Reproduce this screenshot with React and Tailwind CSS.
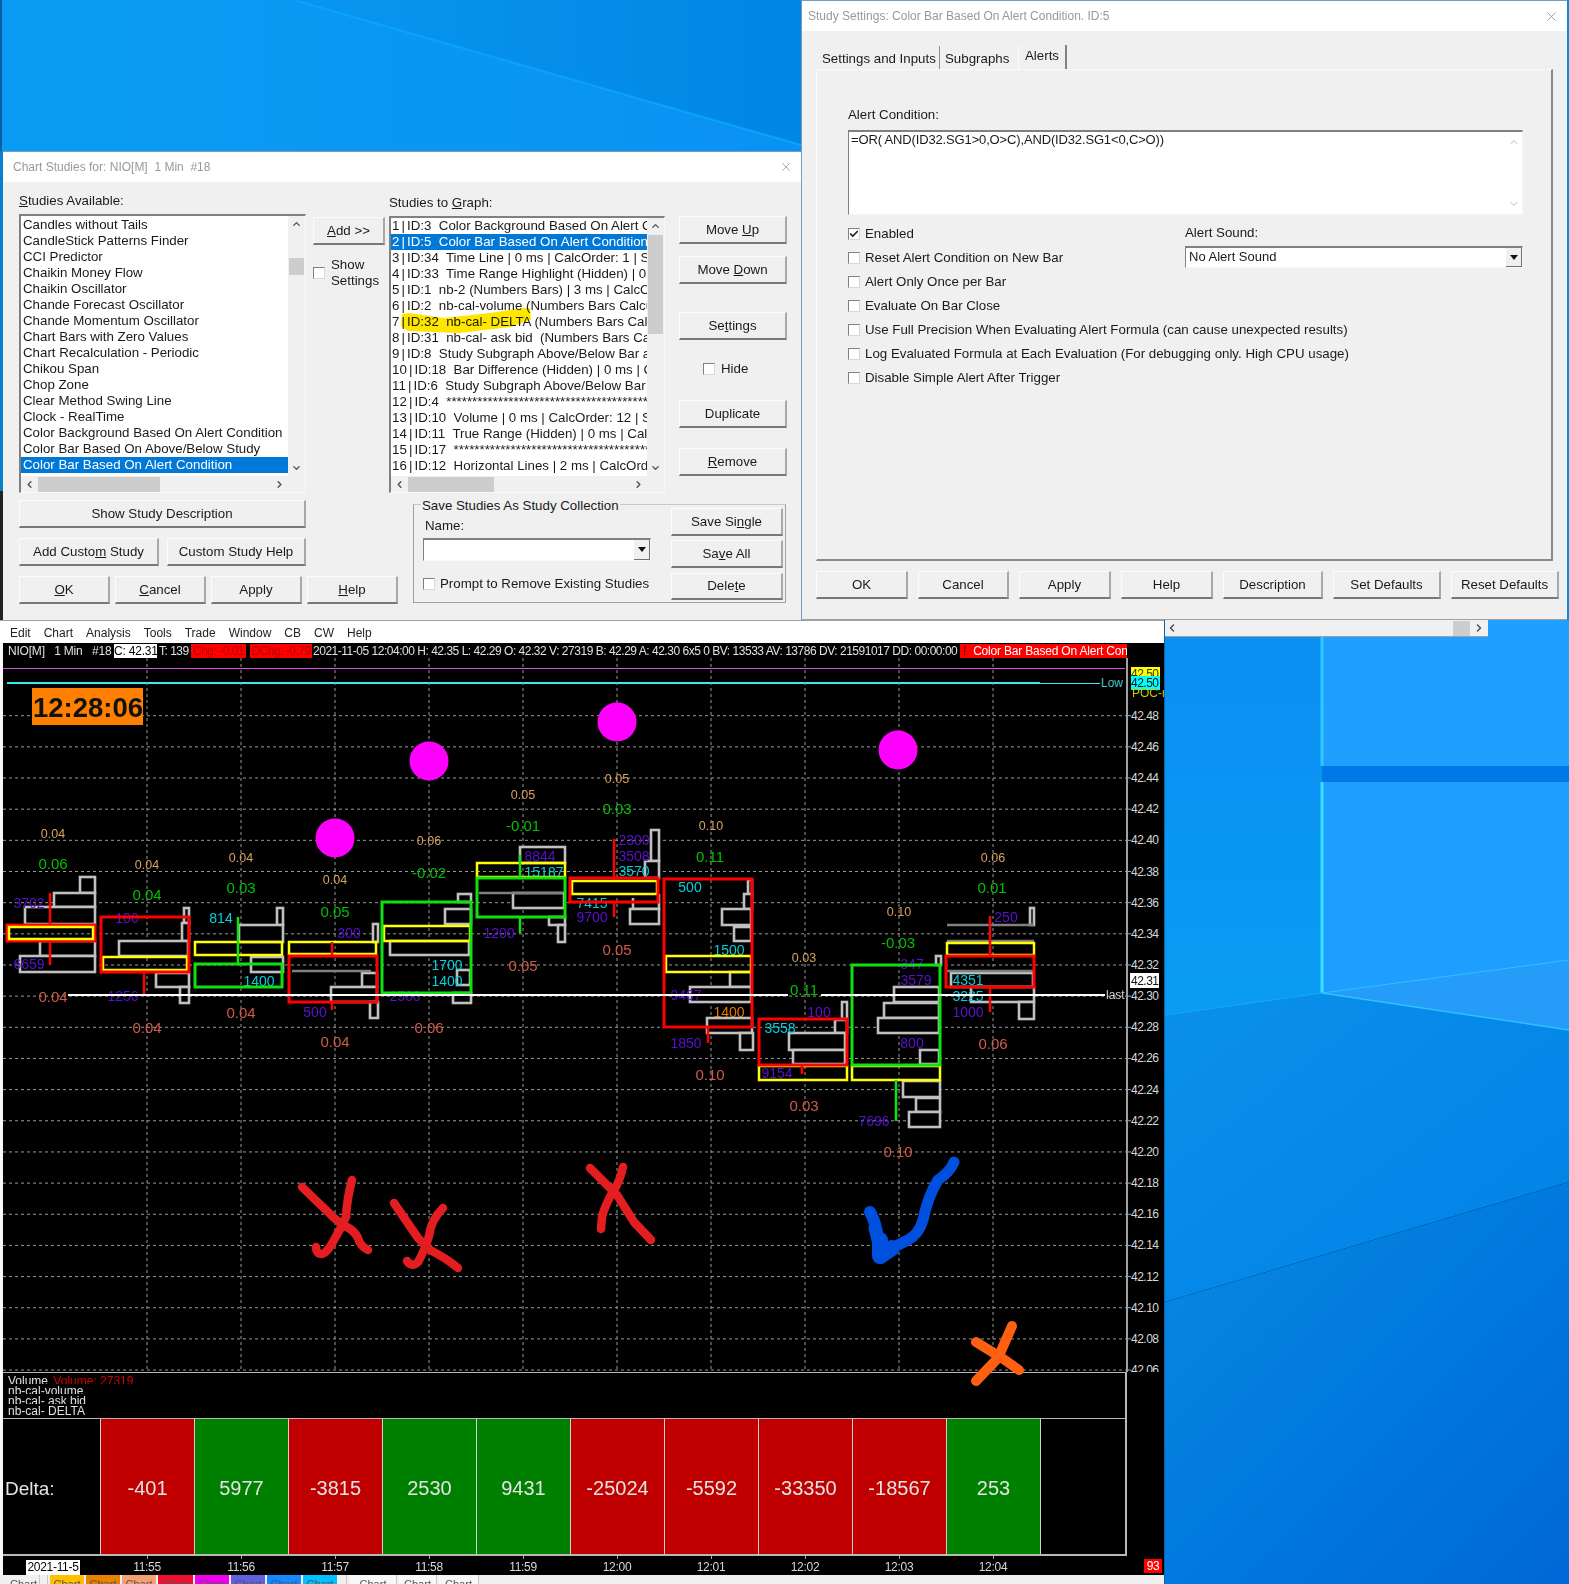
import { Check, ChevronDown, ChevronLeft, ChevronRight, ChevronUp, X } from "lucide-react";

const available = [
  "Candles without Tails", "CandleStick Patterns Finder", "CCI Predictor", "Chaikin Money Flow",
  "Chaikin Oscillator", "Chande Forecast Oscillator", "Chande Momentum Oscillator", "Chart Bars with Zero Values",
  "Chart Recalculation - Periodic", "Chikou Span", "Chop Zone", "Clear Method Swing Line", "Clock - RealTime",
  "Color Background Based On Alert Condition", "Color Bar Based On Above/Below Study", "Color Bar Based On Alert Condition",
];

const stars = "****************************************************************";
const graphed = [
  "1 | ID:3  Color Background Based On Alert Condition", "2 | ID:5  Color Bar Based On Alert Condition",
  "3 | ID:34  Time Line | 0 ms | CalcOrder: 1 | S_", "4 | ID:33  Time Range Highlight (Hidden) | 0 ms",
  "5 | ID:1  nb-2 (Numbers Bars) | 3 ms | CalcOrder", "6 | ID:2  nb-cal-volume (Numbers Bars Calculated)",
  "7 | ID:32  nb-cal- DELTA (Numbers Bars Calculated)", "8 | ID:31  nb-cal- ask bid  (Numbers Bars Calculated)",
  "9 | ID:8  Study Subgraph Above/Below Bar and", "10 | ID:18  Bar Difference (Hidden) | 0 ms | CalcOrder",
  "11 | ID:6  Study Subgraph Above/Below Bar and", "12 | ID:4  " + stars,
  "13 | ID:10  Volume | 0 ms | CalcOrder: 12 | S_", "14 | ID:11  True Range (Hidden) | 0 ms | CalcOrder",
  "15 | ID:17  " + stars, "16 | ID:12  Horizontal Lines | 2 ms | CalcOrder: 16",
];

const alertChecks = [
  "Alert Only Once per Bar", "Evaluate On Bar Close",
  "Use Full Precision When Evaluating Alert Formula (can cause unexpected results)",
  "Log Evaluated Formula at Each Evaluation (For debugging only. High CPU usage)",
  "Disable Simple Alert After Trigger",
];

const times = ["11:55", "11:56", "11:57", "11:58", "11:59", "12:00", "12:01", "12:02", "12:03", "12:04"];
const deltas = ["-401", "5977", "-3815", "2530", "9431", "-25024", "-5592", "-33350", "-18567", "253"];

const tabs = [
  { w: "w-[34px]", c: "bg-[#ffc000]" }, { w: "w-[34px]", c: "bg-[#e88000]" }, { w: "w-[34px]", c: "bg-[#f4a070]" },
  { w: "w-[35px]", c: "bg-[#ee1030]" }, { w: "w-[34px]", c: "bg-[#f000f0]" }, { w: "w-[34px]", c: "bg-[#6060e0]" },
  { w: "w-[34px]", c: "bg-[#1488ff]" }, { w: "w-[34px]", c: "bg-[#00c0ff]" },
];

// chart drawing, coordinates are page pixels
const priceLabels = ["42.48", "42.46", "42.44", "42.42", "42.40", "42.38", "42.36", "42.34", "42.32", "42.30", "42.28", "42.26", "42.24", "42.22", "42.20", "42.18", "42.16", "42.14", "42.12", "42.10", "42.08", "42.06"];
const priceY = (i) => 715.7 + i * 31.16;
const gridX = [147, 241, 335, 429, 523, 617, 711, 805, 899, 993];

// profile steps [x1, y1, x2, y2]
const profile = [
  [80, 877, 95, 893], [54, 893, 95, 907], [25, 907, 95, 924], [40, 941, 95, 956], [20, 956, 95, 972],
  [184, 908, 189, 923], [182, 923, 189, 941], [119, 941, 188, 956], [156, 973, 189, 987], [180, 987, 189, 1003],
  [277, 908, 283, 925], [239, 925, 283, 942], [251, 957, 283, 972],
  [373, 924, 378, 942], [362, 973, 377, 987], [331, 987, 377, 1002], [370, 1002, 378, 1018],
  [458, 894, 471, 902], [445, 909, 471, 924], [390, 941, 469, 955], [457, 970, 470, 985], [453, 993, 471, 1003],
  [520, 847, 565, 863], [513, 893, 564, 908], [549, 917, 565, 925], [558, 925, 565, 942],
  [651, 830, 659, 861], [645, 861, 659, 878], [633, 895, 659, 909], [630, 909, 659, 924],
  [748, 880, 752, 894], [744, 894, 752, 909], [722, 909, 751, 925], [734, 927, 751, 941], [730, 972, 751, 987], [690, 987, 751, 1002], [707, 1018, 752, 1033], [740, 1033, 753, 1050],
  [842, 1002, 847, 1019], [835, 1020, 847, 1033], [789, 1033, 845, 1050], [793, 1050, 845, 1064],
  [936, 956, 941, 965], [894, 987, 939, 1002], [884, 1003, 939, 1018], [878, 1018, 939, 1033], [920, 1050, 939, 1064], [903, 1081, 940, 1097], [916, 1098, 940, 1112], [909, 1112, 940, 1127],
  [1030, 908, 1034, 925], [951, 973, 1033, 987], [971, 987, 1034, 1002], [1019, 1002, 1034, 1019],
];

const darkLines = [[292, 371, 971], [479, 563, 893], [947, 1034, 925], [947, 1034, 941], [947, 1034, 971]];

// boxes [x1, y1, x2, y2, color]
const red = "#ff0000", lime = "#10e010", yel = "#ffff00";
const boxes = [
  [7, 925, 95, 941, red], [9, 927, 93, 939, yel],
  [103, 957, 187, 970, yel], [101, 917, 189, 972, red],
  [195, 942, 282, 955, yel], [195, 964, 282, 987, lime],
  [289, 942, 376, 954, yel], [289, 956, 377, 1002, red],
  [384, 926, 470, 941, yel], [382, 902, 471, 993, lime],
  [477, 863, 565, 877, yel], [477, 878, 565, 917, lime],
  [572, 881, 657, 894, yel], [570, 878, 658, 902, red],
  [666, 956, 751, 972, yel], [664, 879, 752, 1027, red],
  [759, 1066, 847, 1080, yel], [759, 1019, 847, 1065, red],
  [852, 1066, 940, 1080, yel], [852, 965, 940, 1065, lime],
  [947, 943, 1034, 955, yel], [946, 956, 1034, 987, red],
];

// wicks [x, y1, y2, color]
const wicks = [
  [50, 893, 925, red], [50, 941, 965, red], [144, 972, 995, red], [238, 917, 964, lime],
  [332, 942, 956, red], [332, 1002, 1010, red], [520, 855, 878, lime], [520, 917, 933, lime],
  [614, 839, 880, red], [614, 902, 917, red], [708, 1027, 1043, red], [802, 1065, 1074, red],
  [896, 1080, 1121, lime], [990, 916, 956, red], [990, 987, 1012, red],
];

const labelStyle = {
  tan: { fill: "#d8a060", size: 12.5 }, green: { fill: "#00c000", size: 15 }, salmon: { fill: "#d05a4a", size: 15 },
  purple: { fill: "#5a10d0", size: 14 }, cyan: { fill: "#00d0e0", size: 14 }, orange: { fill: "#e87800", size: 14 },
};

const labels = [
  [53, 833, "0.04", "tan"], [53, 864, "0.06", "green"], [53, 997, "0.04", "salmon"], [29, 903, "3702", "purple"], [29, 964, "6659", "purple"],
  [147, 864, "0.04", "tan"], [147, 895, "0.04", "green"], [147, 1028, "0.04", "salmon"], [127, 918, "100", "purple"], [123, 996, "1256", "purple"],
  [241, 857, "0.04", "tan"], [241, 888, "0.03", "green"], [241, 1013, "0.04", "salmon"], [221, 918, "814", "cyan"], [259, 981, "1400", "cyan"],
  [335, 879, "0.04", "tan"], [335, 912, "0.05", "green"], [335, 1042, "0.04", "salmon"], [349, 933, "300", "purple"], [315, 1012, "500", "purple"],
  [429, 840, "0.06", "tan"], [429, 873, "-0.02", "green"], [429, 1028, "0.06", "salmon"], [447, 965, "1700", "cyan"], [447, 981, "1400", "cyan"], [405, 996, "2560", "purple"],
  [523, 794, "0.05", "tan"], [523, 826, "-0.01", "green"], [523, 966, "0.05", "salmon"], [540, 856, "8844", "purple"], [544, 872, "15187", "cyan"], [499, 933, "1200", "purple"],
  [617, 778, "0.05", "tan"], [617, 809, "0.03", "green"], [617, 950, "0.05", "salmon"], [634, 840, "2300", "purple"], [634, 856, "3508", "purple"], [634, 871, "3570", "cyan"], [592, 903, "7415", "cyan"], [592, 917, "9700", "purple"],
  [711, 825, "0.10", "tan"], [710, 857, "0.11", "green"], [710, 1075, "0.10", "salmon"], [690, 887, "500", "cyan"], [729, 950, "1500", "cyan"], [686, 995, "9467", "purple"], [729, 1012, "1400", "orange"], [686, 1043, "1850", "purple"],
  [804, 957, "0.03", "tan"], [804, 1106, "0.03", "salmon"], [819, 1012, "100", "purple"], [780, 1028, "3558", "cyan"], [777, 1073, "9154", "purple"],
  [899, 911, "0.10", "tan"], [898, 943, "-0.03", "green"], [898, 1152, "0.10", "salmon"], [912, 964, "347", "purple"], [916, 980, "3579", "purple"], [912, 1043, "800", "purple"], [874, 1121, "7696", "purple"],
  [993, 857, "0.06", "tan"], [992, 888, "0.01", "green"], [993, 1044, "0.06", "salmon"], [1006, 917, "250", "purple"], [968, 980, "4351", "cyan"], [968, 996, "3225", "cyan"], [968, 1012, "1000", "purple"],
];

const dots = [[335, 838], [429, 761], [617, 722], [898, 750]];

function ScrollV({ thumb }) {
  return (
    <div className="w-[17px] flex flex-col items-center bg-[#f0f0f0] text-[#505050]">
      <ChevronUp size={11} strokeWidth={3} className="h-4" />
      <div className={`w-[15px] bg-[#cdcdcd] ${thumb}`} />
      <div className="flex-1" />
      <ChevronDown size={11} strokeWidth={3} className="h-4" />
    </div>
  );
}

function ScrollH({ thumb }) {
  return (
    <div className="h-4 flex items-center bg-[#f0f0f0] text-[#505050]">
      <ChevronLeft size={11} strokeWidth={3} className="w-[17px]" />
      <div className={`h-[15px] bg-[#cdcdcd] ${thumb}`} />
      <div className="flex-1" />
      <ChevronRight size={11} strokeWidth={3} className="w-[17px]" />
    </div>
  );
}

function Btn({ className = "", children }) {
  return (
    <button className={`h-7 flex items-center justify-center bg-[#f0f0f0] border-t border-l border-[#fcfcfc] border-r-2 border-b-2 border-r-[#a8a8a8] border-b-[#787878] text-[13.3px] ${className}`}>
      <span>{children}</span>
    </button>
  );
}

function Box({ checked, className = "" }) {
  return (
    <span className={`w-3 h-3 flex-none flex items-center justify-center bg-white border-t border-l border-[#808080] border-r border-b border-r-[#d8d8d8] border-b-[#d8d8d8] ${className}`}>
      {checked && <Check size={10} strokeWidth={4} className="text-[#222]" />}
    </span>
  );
}

function Combo({ className = "", text }) {
  return (
    <div className={`flex items-stretch bg-white border-t-2 border-l border-[#808080] border-b border-r border-b-[#f8f8f8] border-r-[#f8f8f8] ${className}`}>
      <span className="flex-1 pl-[3px] leading-[18px] text-[13px]">{text}</span>
      <span className="w-[16px] flex items-center justify-center bg-[#f0f0f0] border-r border-b border-[#707070]">
        <svg width="8" height="5" viewBox="0 0 8 5"><polygon points="0,0 8,0 4,5" fill="#111" /></svg>
      </span>
    </div>
  );
}

function StudiesDialog() {
  return (
    <div className="flex-1 bg-[#f0f0f0] flex flex-col border-t border-[#7a9cbc] text-[13.3px] text-[#1a1a1a]">
      <div className="h-[30px] bg-white flex items-center justify-between pl-[10px] pr-[8px] text-[12px] text-[#999]">
        <span className="whitespace-pre">Chart Studies for: NIO[M]  1 Min  #18</span>
        <X size={14} strokeWidth={1.2} className="text-[#888]" />
      </div>

      <div className="h-[311px] flex pl-4">
        <div className="w-[287px] pt-[9px]">
          <div className="h-[23px]"><u>S</u>tudies Available:</div>
          <div className="h-[279px] flex flex-col border-t-2 border-l-2 border-[#808080] border-r border-b border-r-[#f8f8f8] border-b-[#f8f8f8]">
            <div className="flex h-[260px]">
              <div className="flex-1 bg-white pt-[1px] overflow-hidden">
                {available.map((s, i) => (
                  <div key={s} className={`h-4 leading-4 pl-[2px] whitespace-nowrap ${i === 15 ? "bg-[#0078d7] text-white" : ""}`}>{s}</div>
                ))}
              </div>
              <ScrollV thumb="mt-[26px] h-[17px]" />
            </div>
            <div className="mr-[17px]"><ScrollH thumb="w-[122px]" /></div>
          </div>
        </div>

        <div className="w-[72px] ml-[7px] pt-[35px]">
          <Btn className="w-[72px]"><u>A</u>dd &gt;&gt;</Btn>
          <div className="flex mt-[12px]">
            <Box className="mt-[10px]" />
            <div className="ml-[6px] leading-4">Show<br />Settings</div>
          </div>
        </div>

        <div className="w-[276px] ml-[4px] pt-[11px]">
          <div className="h-[23px]">Studies to <u>G</u>raph:</div>
          <div className="h-[277px] flex flex-col border-t-2 border-l-2 border-[#808080] border-r border-b border-r-[#f8f8f8] border-b-[#f8f8f8]">
            <div className="flex h-[258px]">
              <div className="relative w-[257px] bg-white overflow-hidden">
                {graphed.map((s, i) => (
                  <div key={s} className={`h-4 leading-4 pl-[1px] whitespace-pre overflow-hidden ${i === 1 ? "bg-[#0078d7] text-white" : ""}`}>
                    <span className="[word-spacing:-1.6px]">{s.split("  ")[0]}</span>
                    {"  " + s.split("  ").slice(1).join("  ")}
                  </div>
                ))}
                <svg className="absolute left-[9px] top-[90px] mix-blend-multiply" width="135" height="30" viewBox="400 308 135 30">
                  <path d="M402 314 L410 313 L444 318 L490 313 L530 307 L531 320 L510 327 L459 333 L408 331 L401 326 Z" fill="#ffe600" />
                </svg>
              </div>
              <ScrollV thumb="mt-[1px] h-[99px]" />
            </div>
            <div className="mr-[17px]"><ScrollH thumb="w-[86px]" /></div>
          </div>
        </div>

        <div className="w-[108px] ml-[14px] pt-[34px] flex flex-col">
          <Btn>Move <u>U</u>p</Btn>
          <Btn className="mt-3">Move <u>D</u>own</Btn>
          <Btn className="mt-7">Se<u>t</u>tings</Btn>
          <div className="h-[18px] mt-5 pl-[24px] flex items-center gap-[6px]"><Box />Hide</div>
          <Btn className="mt-[22px]">Duplicate</Btn>
          <Btn className="mt-5"><u>R</u>emove</Btn>
        </div>
      </div>

      <div className="flex pl-4 mt-[7px]">
        <div className="w-[379px]">
          <Btn className="w-[287px]">Show Study Description</Btn>
          <div className="flex gap-2 mt-[10px]">
            <Btn className="w-[140px]">Add Custo<u>m</u> Study</Btn>
            <Btn className="w-[139px]">Custom Study Help</Btn>
          </div>
          <div className="flex gap-[5px] mt-[10px]">
            <Btn className="w-[91px]"><u>O</u>K</Btn>
            <Btn className="w-[91px]"><u>C</u>ancel</Btn>
            <Btn className="w-[91px]">Apply</Btn>
            <Btn className="w-[91px]"><u>H</u>elp</Btn>
          </div>
        </div>

        <div className="relative w-[373px] h-[99px] ml-[15px] mt-[4px] flex border border-[#a0a0a0] border-t-[#c8c8c8]">
          <span className="absolute -top-[9px] left-[7px] px-[1px] bg-[#f0f0f0]">Save Studies As Study Collection</span>
          <div className="w-[252px] pl-[9px] pt-[11px]">
            <div className="h-[22px] pl-[2px]">Name:</div>
            <Combo className="w-[228px] h-[23px]" />
            <div className="flex items-center gap-[5px] mt-[13px] whitespace-nowrap"><Box />Prompt to Remove Existing Studies</div>
          </div>
          <div className="w-[112px] ml-[5px] pt-[3px] flex flex-col">
            <Btn>Save Si<u>n</u>gle</Btn>
            <Btn className="mt-1">Sa<u>v</u>e All</Btn>
            <Btn className="mt-[5px] h-[27px]">Dele<u>t</u>e</Btn>
          </div>
        </div>
      </div>
    </div>
  );
}

function AlertDialog() {
  return (
    <div className="w-[766px] h-full bg-[#f0f0f0] flex flex-col border-l border-t border-[#7a9cbc] border-b-[#a0a0a0] border-b text-[13.3px] text-[#1a1a1a]">
      <div className="h-[30px] flex-none bg-white flex items-center justify-between pl-[6px] pr-[8px] text-[12px] text-[#999]">
        <span>Study Settings: Color Bar Based On Alert Condition. ID:5</span>
        <X size={15} strokeWidth={1.2} className="text-[#888]" />
      </div>

      <div className="h-[38px] flex-none pl-[14px] flex items-end">
        <div className="w-[124px] h-[23px] pl-[6px] pt-[4px] border-r border-[#909090] leading-[17px]">Settings and Inputs</div>
        <div className="w-[78px] h-[23px] pl-[5px] pt-[4px] leading-[17px]">Subgraphs</div>
        <div className="w-[49px] h-[24px] pl-[6px] pt-[2px] border-l border-[#fcfcfc] border-r-2 border-r-[#808080] leading-[17px]">Alerts</div>
      </div>

      <div className="h-[492px] flex-none ml-[14px] w-[737px] pl-[31px] pt-[36px] border-t border-l border-[#fafafa] border-r-2 border-b-2 border-r-[#8a8a8a] border-b-[#8a8a8a]">
        <div className="h-[18px] leading-[18px] mb-[6px]">Alert Condition:</div>
        <div className="w-[675px] h-[85px] flex bg-white border-t-2 border-l border-[#808080] border-r border-b border-r-[#f4f4f4] border-b-[#f4f4f4]">
          <div className="flex-1 pl-[2px] leading-[15px] text-[13px] tracking-[-0.15px]">=OR( AND(ID32.SG1&gt;0,O&gt;C),AND(ID32.SG1&lt;0,C&gt;O))</div>
          <div className="w-[17px] flex flex-col items-center justify-between py-[4px] text-[#b8b8b8]">
            <ChevronUp size={12} strokeWidth={2} />
            <ChevronDown size={12} strokeWidth={2} />
          </div>
        </div>
        <div className="flex mt-[7px]">
          <div className="w-[337px]">
            <div className="h-6 flex items-center gap-[5px]"><Box checked />Enabled</div>
            <div className="h-6 flex items-center gap-[5px]"><Box />Reset Alert Condition on New Bar</div>
          </div>
          <div>
            <div className="h-[22px] leading-[22px]">Alert Sound:</div>
            <Combo className="w-[338px] h-[22px] mt-[2px]" text="No Alert Sound" />
          </div>
        </div>
        {alertChecks.map((s) => (
          <div key={s} className="h-6 flex items-center gap-[5px]"><Box />{s}</div>
        ))}
      </div>

      <div className="flex gap-[10px] pl-[14px] mt-[10px]">
        <Btn className="w-[92px]">OK</Btn>
        <Btn className="w-[91px]">Cancel</Btn>
        <Btn className="w-[92px]">Apply</Btn>
        <Btn className="w-[92px]">Help</Btn>
        <Btn className="w-[100px]">Description</Btn>
        <Btn className="w-[108px]">Set Defaults</Btn>
        <Btn className="w-[108px]">Reset Defaults</Btn>
      </div>
    </div>
  );
}

function PricePane() {
  return (
    <svg width="1161" height="714" viewBox="3 658 1161 714" className="block flex-none relative z-10 overflow-visible font-['Liberation_Sans',sans-serif]">
      <defs>
        <clipPath id="paneClip"><rect x="3" y="658" width="1161" height="714" /></clipPath>
      </defs>
      <rect x="3" y="658" width="1161" height="714" fill="#000" />
      <line x1="3" x2="1125" y1="668.5" y2="668.5" stroke="#e050e0" />
      <line x1="7" x2="1040" y1="683" y2="683" stroke="#30f0f0" strokeWidth="2" />
      <line x1="1040" x2="1100" y1="683.5" y2="683.5" stroke="#30f0f0" />
      <text x="1101" y="687" fontSize="12" fill="#40c8c8">Low</text>

      <g clipPath="url(#paneClip)">
        {priceLabels.map((p, i) => (
          <g key={p}>
            <line x1="3" x2="1127" y1={priceY(i)} y2={priceY(i)} stroke="#999" strokeDasharray="3 3" />
            <line x1="1127" x2="1131" y1={priceY(i)} y2={priceY(i)} stroke="#a8a8a8" />
            <text x="1131" y={priceY(i) + 4} fontSize="12" letterSpacing="-0.5" fill="#d8d8d8">{p}</text>
          </g>
        ))}
      </g>
      {gridX.map((x) => (
        <line key={x} x1={x} x2={x} y1="658" y2="1371" stroke="#999" strokeDasharray="3 3" />
      ))}
      <line x1="1127" x2="1127" y1="658" y2="1372" stroke="#a0a0a0" strokeWidth="2" />

      <rect x="32" y="688" width="111" height="37" fill="#ff8000" />
      <text x="88" y="717" fontSize="27.5" fontWeight="700" textAnchor="middle" fill="#111">12:28:06</text>

      {dots.map(([x, y]) => <circle key={x} cx={x} cy={y} r="19.5" fill="#ff00ff" />)}

      {profile.map(([x1, y1, x2, y2]) => (
        <rect key={`${x1}-${y1}`} x={x1} y={y1} width={x2 - x1} height={y2 - y1} fill="#000" stroke="#c0c0c0" strokeWidth="2.6" />
      ))}
      {darkLines.map(([x1, x2, y]) => (
        <line key={`${x1}-${y}`} x1={x1} x2={x2} y1={y} y2={y} stroke="#808080" strokeWidth="2.5" />
      ))}

      {labels.map(([x, y, t, k]) => (
        <text key={`${x}-${y}`} x={x} y={y + labelStyle[k].size * 0.36} fontSize={labelStyle[k].size} textAnchor="middle" fill={labelStyle[k].fill}>{t}</text>
      ))}
      <rect x="570" y="878" width="88" height="20" fill="#000" />

      {boxes.map(([x1, y1, x2, y2, c]) => (
        <rect key={`${x1}-${y1}-${c}`} x={x1} y={y1} width={x2 - x1} height={y2 - y1} fill="none" stroke={c} strokeWidth={c === yel ? 2.5 : 3} />
      ))}
      {wicks.map(([x, y1, y2, c]) => (
        <line key={`${x}-${y1}`} x1={x} x2={x} y1={y1} y2={y2} stroke={c} strokeWidth="2.5" />
      ))}

      <line x1="68" x2="788" y1="995" y2="995" stroke="#fff" strokeWidth="2" />
      <line x1="821" x2="1105" y1="995" y2="995" stroke="#fff" strokeWidth="2" />
      <text x="804" y="995" fontSize="15" textAnchor="middle" fill="#00c000">0.11</text>
      <text x="1106" y="999" fontSize="12" fill="#d0d0d0">last</text>

      <rect x="1131" y="667" width="29" height="14" fill="#ffff00" />
      <text x="1131" y="678" fontSize="12" letterSpacing="-0.5" fill="#333">42.50</text>
      <rect x="1131" y="676" width="29" height="14" fill="#00ffff" />
      <text x="1131" y="687" fontSize="12" letterSpacing="-0.5" fill="#111">42.50</text>
      <g clipPath="url(#paneClip)">
        <text x="1132" y="697" fontSize="12" fill="#c8c800">POC-n</text>
      </g>
      <rect x="1130" y="973" width="29" height="15" fill="#fff" />
      <text x="1131" y="985" fontSize="12" letterSpacing="-0.5" fill="#111">42.31</text>

      {/* hand drawn marks */}
      <g fill="none" strokeLinecap="round" strokeLinejoin="round">
        <g stroke="#e41e20" strokeWidth="8.5">
          <path d="M302 1187 L328 1212 Q340 1224 345 1226 Q354 1230 358 1238 Q360 1246 368 1250" />
          <path d="M352 1180 Q347 1198 346 1217 Q340 1230 334 1240 Q328 1252 322 1254 Q316 1254 316 1247" />
          <path d="M394 1203 L418 1238 L430 1250 Q446 1258 458 1268" />
          <path d="M443 1208 Q431 1220 429 1236 Q424 1252 418 1262 Q412 1268 407 1261" />
          <path d="M590 1168 L617 1195 L634 1222 L651 1240" />
          <path d="M623 1167 Q620 1182 612 1193 Q604 1208 602 1217 L601 1229" />
        </g>
        <g stroke="#0050e0" strokeWidth="11">
          <path d="M870 1212 Q876 1222 878 1240 L881 1258" strokeWidth="12" />
          <path d="M874 1228 L881 1257 L896 1246 L908 1240 Q919 1234 923 1220 Q928 1196 938 1180 Q950 1172 954 1162" />
          <path d="M880 1240 L880 1256 L892 1248" strokeWidth="16" />
        </g>
        <g stroke="#ff6010" strokeWidth="10">
          <path d="M976 1342 L1002 1358 L1019 1370" />
          <path d="M1012 1326 L998 1358 L976 1381" />
        </g>
      </g>
    </svg>
  );
}

function Chart() {
  return (
    <div className="w-[1164px] h-full flex flex-col bg-white">
      <div className="h-[23px] flex-none flex items-center gap-[13px] pl-[10px] pt-px text-[12px] text-[#222] border-t border-[#a0a0a0]">
        <span>Edit</span><span>Chart</span><span>Analysis</span><span>Tools</span><span>Trade</span><span>Window</span><span>CB</span><span>CW</span><span>Help</span>
      </div>

      <div className="flex-1 flex flex-col pl-[3px] bg-[#f8f8f8]">
        <div className="h-[15px] flex-none flex items-center pt-px bg-black text-[12px] text-[#e0e0e0] whitespace-nowrap overflow-hidden tracking-[-0.2px]">
          <span className="w-[111px] pl-[5px] whitespace-pre">NIO[M]   1 Min   #18</span>
          <span className="w-[43px] bg-white text-black text-center leading-[14px]">C: 42.31</span>
          <span className="w-[34px] pl-[2px] tracking-[-0.5px]">T: 139</span>
          <span className="w-[55px] bg-[#ff0000] text-[#b00000] text-center leading-[14px] tracking-[-0.5px]">Chg: -0.01</span>
          <span className="w-[62px] ml-[4px] bg-[#ff0000] text-[#b00000] text-center leading-[14px] tracking-[-0.5px]">DChg: -0.79</span>
          <span className="w-[648px] pl-[1px] overflow-hidden tracking-[-0.48px]">2021-11-05 12:04:00 H: 42.35 L: 42.29 O: 42.32 V: 27319 B: 42.29 A: 42.30 6x5 0 BV: 13533 AV: 13786 DV: 21591017 DD: 00:00:00</span>
          <span className="w-[167px] bg-[#ff0000] text-white pl-[3px] leading-[14px] overflow-hidden"><b className="font-normal text-[#600000] mr-[7px]">!</b>Color Bar Based On Alert Condition</span>
        </div>

        <PricePane />

        <div className="h-[46px] flex-none flex bg-black">
          <div className="w-[1124px] border-t border-r-2 border-[#b8b8b8] pl-[5px] pt-[1px] text-[12px] text-[#e0e0e0]">
            <div className="h-[10px] leading-[14px] overflow-hidden">Volume <span className="text-[#d00000] ml-[2px]">Volume: 27319</span></div>
            <div className="h-[10px] leading-[14px] overflow-hidden">nb-cal-volume</div>
            <div className="h-[10px] leading-[14px] overflow-hidden">nb-cal- ask bid</div>
            <div className="h-[13px] leading-[14px] overflow-hidden">nb-cal- DELTA</div>
          </div>
        </div>

        <div className="h-[138px] flex-none flex bg-black">
          <div className="w-[1124px] flex border-t border-b-2 border-r-2 border-[#b8b8b8] text-[#e4e4e4] text-[20px]">
            <div className="w-[97px] flex items-center pl-[2px] pt-[6px] text-[19px]">Delta:</div>
            {deltas.map((d) => (
              <div key={d} className={`w-[94px] flex items-center justify-center pt-[3px] border-l border-[#d0d0d0] ${d[0] === "-" ? "bg-[#c00000]" : "bg-[#008000]"}`}>{d}</div>
            ))}
            <div className="flex-1 border-l border-[#d0d0d0]" />
          </div>
        </div>

        <div className="h-[19px] flex-none flex bg-black text-[12px] text-[#d8d8d8] tracking-[-0.3px]">
          <div className="w-[97px] pl-[23px] pt-[4px]">
            <div className="w-[54px] h-[15px] bg-white text-black text-center leading-[15px]">2021-11-5</div>
          </div>
          {times.map((t) => (
            <div key={t} className="w-[94px] flex flex-col items-center">
              <div className="w-px h-[3px] bg-[#a8a8a8]" />
              <div className="leading-[16px]">{t}</div>
            </div>
          ))}
          <div className="flex-1 flex justify-end items-center pr-[2px]">
            <span className="w-[18px] h-[14px] bg-[#ff0000] text-white text-center leading-[14px]">93</span>
          </div>
        </div>

        <div className="h-[9px] flex-none flex bg-[#f0f0f0] text-[11px] leading-[18px] text-[#555] text-center -ml-[3px] overflow-hidden">
          <div className="w-[32px] ml-[8px] border-r border-[#c8c8c8]">Chart</div>
          <div className="w-[8px] mr-[2px] border-r border-[#c8c8c8]" />
          {tabs.map((t) => <div key={t.c} className={`${t.w} mr-[2px] ${t.c}`}>Chart</div>)}
          <div className="w-[8px] border-r border-[#c8c8c8]" />
          <div className="w-[47px] ml-[3px] bg-[#f8f8f8] border-r border-[#c8c8c8]">Chart</div>
          <div className="w-[38px] ml-[2px] bg-[#f8f8f8] border-r border-[#c8c8c8]">Chart</div>
          <div className="w-[40px] ml-[2px] bg-[#f8f8f8] border-r border-[#c8c8c8]">Chart</div>
        </div>
      </div>
    </div>
  );
}

function Desktop() {
  return (
    <div className="relative flex-1 h-full border-l border-[#0a5fa8]">
      <svg className="absolute inset-0" width="404" height="964" viewBox="1165 620 404 964">
        <defs>
          <linearGradient id="deskBase" x1="0" y1="0" x2="0" y2="1">
            <stop offset="0" stopColor="#0a8ef2" />
            <stop offset="1" stopColor="#0a9cf4" />
          </linearGradient>
          <linearGradient id="deskMid" x1="0" y1="0" x2="1" y2="1">
            <stop offset="0" stopColor="#0a90ec" />
            <stop offset="1" stopColor="#0082e6" />
          </linearGradient>
          <linearGradient id="deskLow" x1="0" y1="0" x2="1" y2="1">
            <stop offset="0" stopColor="#0a88e2" />
            <stop offset="0.5" stopColor="#007ade" />
            <stop offset="1" stopColor="#0068d6" />
          </linearGradient>
        </defs>
        <rect x="1165" y="620" width="404" height="400" fill="url(#deskBase)" />
        <rect x="1322" y="620" width="247" height="146" fill="#1f9fff" />
        <rect x="1322" y="766" width="247" height="16" fill="#0078e8" />
        <polygon points="1322,782 1569,782 1569,960 1322,993" fill="#1e9eff" />
        <polygon points="1322,993 1569,960 1569,1030" fill="#249cf8" />
        <polygon points="1165,1015 1322,993 1569,1030 1569,1182 1165,1302" fill="url(#deskMid)" />
        <polygon points="1165,1302 1569,1182 1569,1584 1165,1584" fill="url(#deskLow)" />
        <line x1="1322" y1="620" x2="1322" y2="766" stroke="#30c8ff" strokeWidth="3" />
        <line x1="1322" y1="782" x2="1322" y2="993" stroke="#38e0ff" strokeWidth="3" />
        <line x1="1322" y1="993" x2="1569" y2="1030" stroke="#30c0ff" strokeWidth="1.5" />
        <line x1="1322" y1="993" x2="1569" y2="960" stroke="#30c0ff" />
        <line x1="1165" y1="1015" x2="1322" y2="993" stroke="#14a8ff" />
      </svg>
      <div className="relative w-[323px] h-[17px] flex items-center bg-[#f0f0f0] border-b border-[#a0a0a0] text-[#505050]">
        <ChevronLeft size={12} strokeWidth={3} className="w-[14px]" />
        <div className="flex-1" />
        <div className="w-[17px] h-[15px] bg-[#cdcdcd]" />
        <ChevronRight size={12} strokeWidth={3} className="w-[18px]" />
      </div>
    </div>
  );
}

export default function App() {
  return (
    <div className="w-[1569px] h-[1584px] overflow-hidden flex flex-col font-['Liberation_Sans',sans-serif] bg-black">
      <div className="h-[620px] flex-none flex">
        <div className="w-[801px] flex flex-col">
          <svg className="block flex-none" width="801" height="151" viewBox="0 0 801 151">
            <defs>
              <linearGradient id="topSky" x1="0" y1="0" x2="1" y2="0">
                <stop offset="0.3" stopColor="#0a98f2" />
                <stop offset="1" stopColor="#0086e4" />
              </linearGradient>
              <linearGradient id="topLow" x1="0" y1="0" x2="1" y2="0">
                <stop offset="0" stopColor="#0a9cf4" />
                <stop offset="1" stopColor="#0a92f2" />
              </linearGradient>
            </defs>
            <rect width="801" height="151" fill="url(#topSky)" />
            <polygon points="294,0 801,145 801,151 0,151 0,0" fill="url(#topLow)" />
            <line x1="294" y1="0" x2="801" y2="145" stroke="#0aa4fc" strokeWidth="2" />
            <rect width="2" height="151" fill="#0a5fa0" />
          </svg>
          <div className="flex-1 flex min-h-0">
            <div className="w-[3px] flex flex-col">
              <div className="h-[340px] bg-[#0a7fd0]" />
              <div className="flex-1 bg-[#222]" />
            </div>
            <StudiesDialog />
          </div>
        </div>
        <div className="flex-1 bg-[#0a88e8]">
          <AlertDialog />
        </div>
      </div>
      <div className="flex-1 flex min-h-0">
        <Chart />
        <Desktop />
      </div>
    </div>
  );
}
